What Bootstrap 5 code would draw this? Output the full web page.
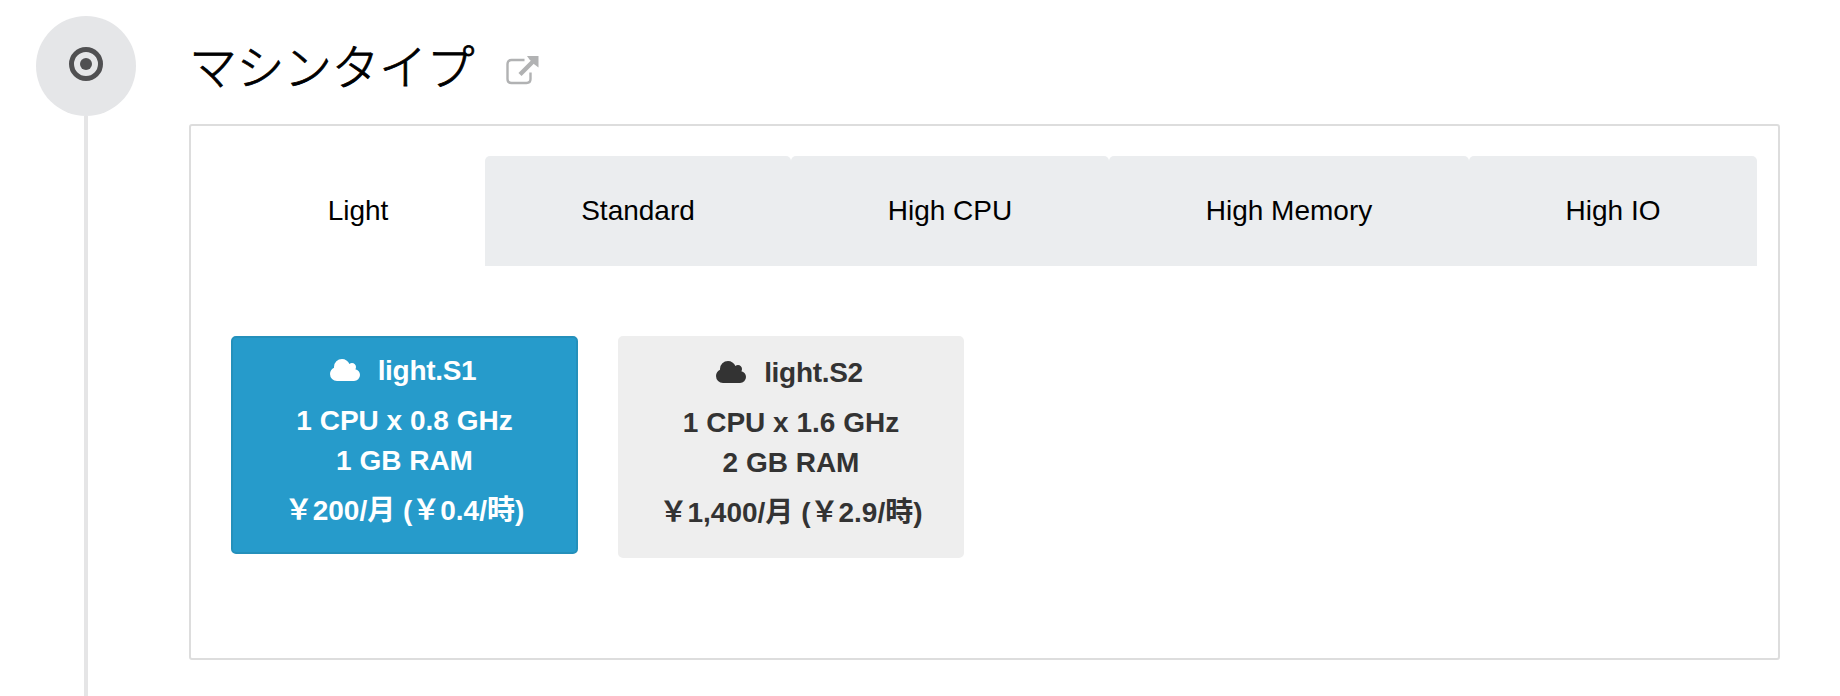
<!DOCTYPE html>
<html lang="ja">
<head>
<meta charset="utf-8">
<meta name="viewport" content="width=device-width, initial-scale=1">
<title>マシンタイプ</title>
<link rel="stylesheet" href="https://cdn.jsdelivr.net/npm/bootstrap@5.3.0/dist/css/bootstrap.min.css">
<style>
body { font-family: "Liberation Sans", "Noto Sans CJK JP", sans-serif; font-size: 28px; line-height: 40px; color: #000; background: #fff; }
.step { height: 696px; padding: 16px 60px 0 36px; }
.rail { width: 100px; }
.rail-dot { width: 100px; height: 100px; background: #e5e6e8; padding-bottom: 4px; }
.rail-line { width: 4px; background: #e5e5e6; }
.step-body { margin-left: 53px; }
.step-title { height: 108px; padding-top: 16px; }
.step-title h1 { font: 300 48px/64px "Noto Sans CJK JP", sans-serif; letter-spacing: -.5px; -webkit-text-stroke: .8px #000; width: 288px; white-space: nowrap; }
.ext { margin: 24px 0 0 28.5px; }
.panel { height: 536px; border: 2px solid #ddd; border-radius: 3px; padding: 30px 21px 0 40px; }
.tabs { height: 110px; }
.tabs .nav-link { height: 110px; padding: 0; color: #000; background: #ebedef; border-radius: 5px 5px 0 0; }
.tabs .nav-link.active { background: #fff; }
.t-light { width: 254px; } .t-std { width: 306px; } .t-cpu { width: 318px; } .t-mem { width: 360px; } .t-io { width: 288px; }
.plans { margin-top: 70px; gap: 40px; }
.plan { width: 346px; height: 222px; padding: 15px 0 0; border: 2px solid #eee; border-radius: 5px; background: #eee; color: #333; font-size: 28px; line-height: 40px; font-weight: 700; }
.plan:hover { color: #333; background: #eee; border-color: #eee; }
.plan.selected, .plan.selected:hover { width: 347px; height: 218px; padding-top: 13px; background: #269bcb; border-color: #2490bb; color: #fff; }
.plan-name { margin: 0 3px 10px 0; letter-spacing: -.3px; }
.plan-spec { margin-bottom: 10px; }
.cloud { margin: 0 18px 2px 0; }
</style>
<script src="https://cdn.jsdelivr.net/npm/bootstrap@5.3.0/dist/js/bootstrap.bundle.min.js"></script>
</head>
<body class="overflow-hidden">
<svg class="d-none"><symbol id="cloud" viewBox="0 128 1920 1408" preserveAspectRatio="none"><path fill="currentColor" d="M1920 1152q0 159-112.500 271.500t-271.500 112.500h-1088q-185 0-316.500-131.500t-131.500-316.500q0-132 71-241.500t187-163.500q-2-28-2-43 0-212 150-362t362-150q158 0 286.500 88t187.500 230q70-62 166-62 106 0 181 75t75 181q0 75-41 138 129 30 213 134.500t84 239.500z"/></symbol></svg>
<section class="step d-flex">
  <div class="rail d-flex flex-column align-items-center flex-shrink-0">
    <div class="rail-dot rounded-circle d-flex align-items-center justify-content-center flex-shrink-0">
      <svg width="36" height="36" viewBox="0 0 36 36"><circle cx="18" cy="18" r="14.500" fill="none" stroke="#505052" stroke-width="5"/><circle cx="18" cy="18" r="6" fill="#505052"/></svg>
    </div>
    <div class="rail-line flex-grow-1"></div>
  </div>
  <div class="step-body flex-grow-1">
    <header class="step-title d-flex align-items-start">
      <h1 class="mb-0">マシンタイプ</h1>
      <a class="ext d-block lh-1" href="#" aria-label="開く"><svg class="d-block" width="33" height="29" viewBox="0 0 33 29"><path d="M18.500 4H5.500Q1.500 4 1.500 8V23Q1.500 27 5.500 27H20.500Q24.500 27 24.500 23V16.500" fill="none" stroke="#b1b2b3" stroke-width="2.400"/><path d="M14 18.500 27 5.500" fill="none" stroke="#b1b2b3" stroke-width="4.400"/><path d="M21 0H32.500V11.500L28.500 8.500 23.500 3.500Z" fill="#b1b2b3"/></svg></a>
    </header>
    <div class="panel">
      <nav class="tabs nav flex-nowrap">
        <a class="nav-link t-light active d-flex align-items-center justify-content-center" href="#">Light</a>
        <a class="nav-link t-std d-flex align-items-center justify-content-center" href="#">Standard</a>
        <a class="nav-link t-cpu d-flex align-items-center justify-content-center" href="#">High CPU</a>
        <a class="nav-link t-mem d-flex align-items-center justify-content-center" href="#">High Memory</a>
        <a class="nav-link t-io d-flex align-items-center justify-content-center" href="#">High IO</a>
      </nav>
      <div class="plans d-flex align-items-start">
        <button type="button" class="btn plan selected d-flex flex-column align-items-center">
          <span class="plan-name d-flex align-items-center"><svg class="cloud" width="30" height="22"><use href="#cloud"/></svg>light.S1</span>
          <span class="plan-spec">1 CPU x 0.8 GHz<br>1 GB RAM</span>
          <span>￥200/月 (￥0.4/時)</span>
        </button>
        <button type="button" class="btn plan d-flex flex-column align-items-center">
          <span class="plan-name d-flex align-items-center"><svg class="cloud" width="30" height="22"><use href="#cloud"/></svg>light.S2</span>
          <span class="plan-spec">1 CPU x 1.6 GHz<br>2 GB RAM</span>
          <span>￥1,400/月 (￥2.9/時)</span>
        </button>
      </div>
    </div>
  </div>
</section>
</body>
</html>
